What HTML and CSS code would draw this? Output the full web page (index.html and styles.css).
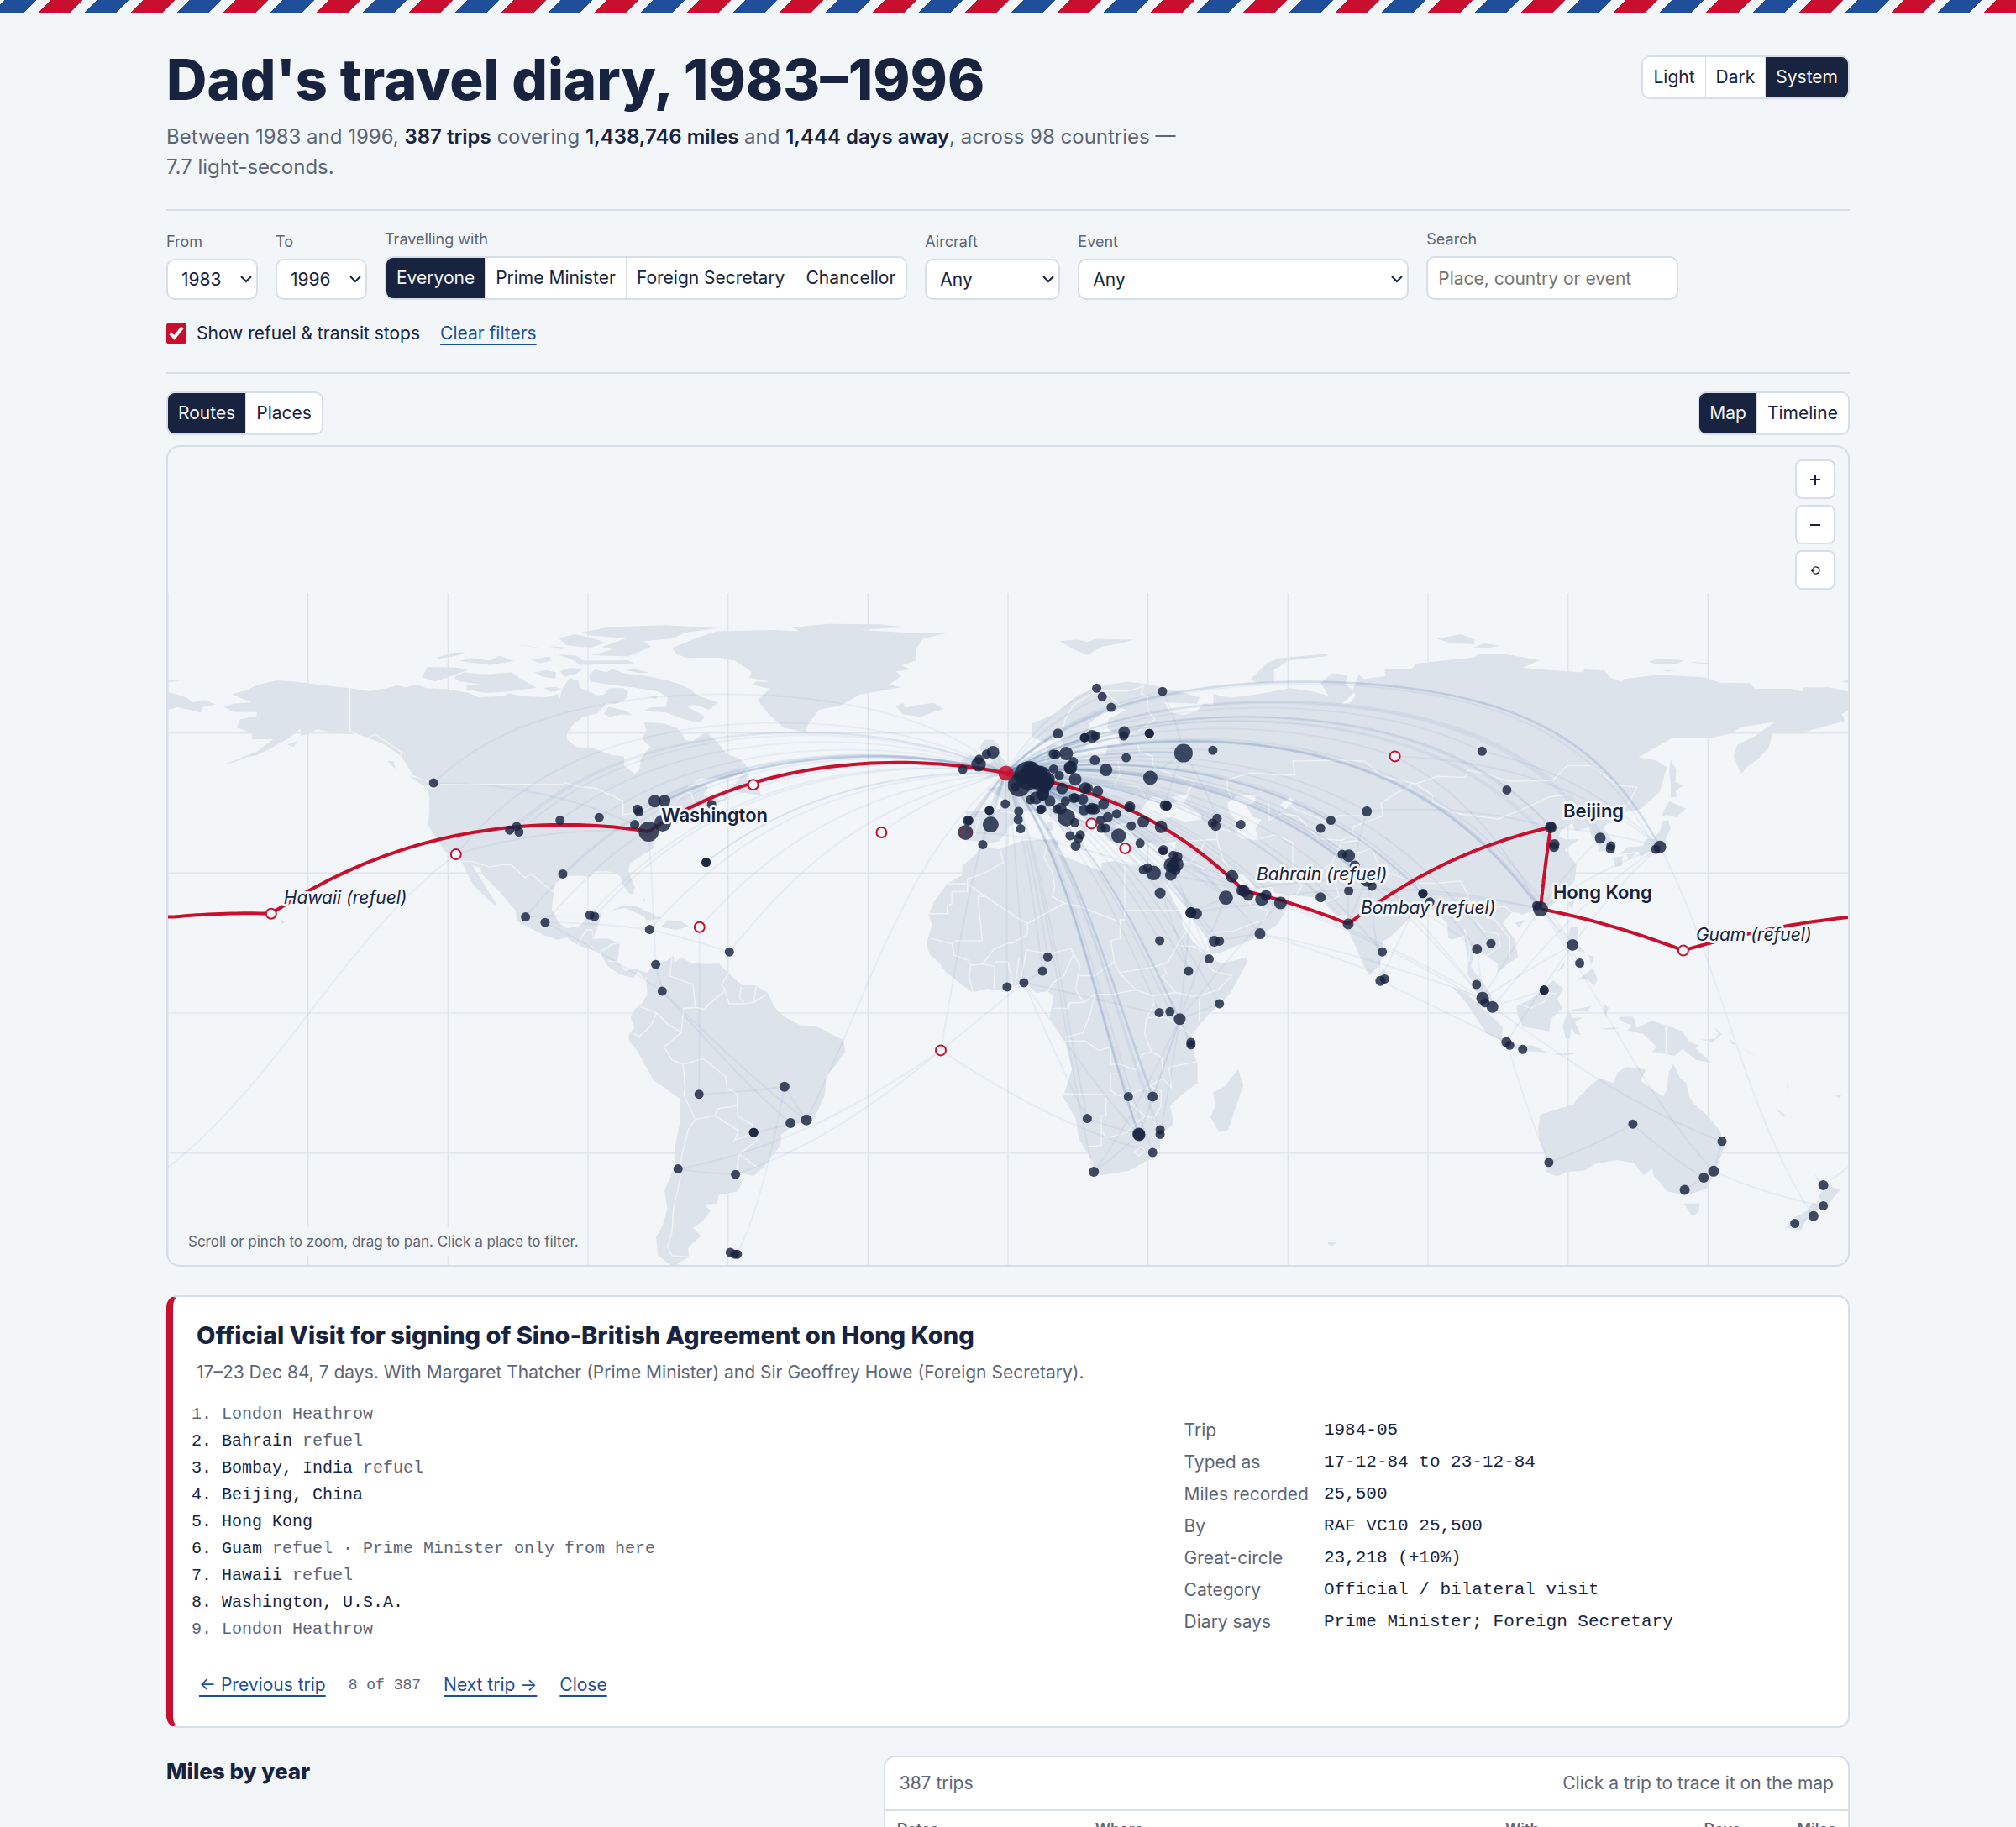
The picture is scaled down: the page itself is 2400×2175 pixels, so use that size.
FILE: index.html
```html
<!DOCTYPE html>
<html lang="en">
<head>
  <meta charset="UTF-8" />
  <meta name="viewport" content="width=device-width, initial-scale=1.0"/>
  <title>Dad's travel diary, 1983–1996</title>
  <link rel="stylesheet" href="styles.css">
</head>
<body>

  <div class="airmail"></div>

  <div class="page">
    <header class="top">
      <div>
        <h1>Dad's travel diary, 1983–1996</h1>
        <p class="summary">Between 1983 and 1996, <strong>387 trips</strong> covering <strong>1,438,746 miles</strong> and <strong>1,444 days away</strong>, across 98 countries — 7.7&nbsp;light-seconds.</p>
      </div>
      <div class="segment" role="group" aria-label="Theme">
        <button type="button">Light</button>
        <button type="button">Dark</button>
        <button type="button" class="active">System</button>
      </div>
    </header>

    <form class="filters">
      <div class="field">
        <label for="from">From</label>
        <select id="from" class="year"><option>1983</option></select>
      </div>
      <div class="field">
        <label for="to">To</label>
        <select id="to" class="year"><option>1996</option></select>
      </div>
      <div class="field">
        <span class="label" id="with-label">Travelling with</span>
        <div class="segment" role="group" aria-labelledby="with-label">
          <button type="button" class="active">Everyone</button>
          <button type="button">Prime Minister</button>
          <button type="button">Foreign Secretary</button>
          <button type="button">Chancellor</button>
        </div>
      </div>
      <div class="field">
        <label for="aircraft">Aircraft</label>
        <select id="aircraft" class="aircraft"><option>Any</option></select>
      </div>
      <div class="field">
        <label for="event">Event</label>
        <select id="event" class="event"><option>Any</option></select>
      </div>
      <div class="field">
        <label for="search">Search</label>
        <input type="search" id="search" class="search" placeholder="Place, country or event">
      </div>
      <div class="options">
        <label class="check"><input type="checkbox" checked> Show refuel &amp; transit stops</label>
        <a href="#" class="link">Clear filters</a>
      </div>
    </form>

    <div class="views">
      <div class="segment" role="group" aria-label="Layer">
        <button type="button" class="active">Routes</button>
        <button type="button">Places</button>
      </div>
      <div class="segment" role="group" aria-label="View">
        <button type="button" class="active">Map</button>
        <button type="button">Timeline</button>
      </div>
    </div>

    <div class="map">
      <svg id="map" viewBox="0 0 2000 974" role="img" aria-label="World map of trips"></svg>
      <div class="zoom">
        <button type="button" aria-label="Zoom in">
          <svg viewBox="0 0 20 20"><path d="M10 4v12M4 10h12"/></svg>
        </button>
        <button type="button" aria-label="Zoom out">
          <svg viewBox="0 0 20 20"><path d="M4 10h12"/></svg>
        </button>
        <button type="button" aria-label="Reset zoom">
          <svg viewBox="0 0 20 20" class="reset"><path d="M5 10H9.5M5 10l2.5-2M5 10l2.5 2M7.5 7.5C9 5 15 5.5 15 10s-6 5-7.5 2.5"/></svg>
        </button>
      </div>
      <p class="hint">Scroll or pinch to zoom, drag to pan. Click a place to filter.</p>
    </div>

    <section class="trip">
      <h2>Official Visit for signing of Sino-British Agreement on Hong Kong</h2>
      <p class="trip-meta">17–23 Dec 84, 7 days. With Margaret Thatcher (Prime Minister) and Sir Geoffrey Howe (Foreign Secretary).</p>
      <div class="trip-body">
        <ol class="stops">
          <li class="home">London Heathrow</li>
          <li>Bahrain <span>refuel</span></li>
          <li>Bombay, India <span>refuel</span></li>
          <li>Beijing, China</li>
          <li>Hong Kong</li>
          <li>Guam <span>refuel · Prime Minister only from here</span></li>
          <li>Hawaii <span>refuel</span></li>
          <li>Washington, U.S.A.</li>
          <li class="home">London Heathrow</li>
        </ol>
        <dl class="facts">
          <dt>Trip</dt><dd>1984-05</dd>
          <dt>Typed as</dt><dd>17-12-84 to 23-12-84</dd>
          <dt>Miles recorded</dt><dd>25,500</dd>
          <dt>By</dt><dd>RAF VC10 25,500</dd>
          <dt>Great-circle</dt><dd>23,218 (+10%)</dd>
          <dt>Category</dt><dd>Official / bilateral visit</dd>
          <dt>Diary says</dt><dd>Prime Minister; Foreign Secretary</dd>
        </dl>
      </div>
      <nav class="pager">
        <a href="#" class="link">← Previous trip</a>
        <span class="count">8 of 387</span>
        <a href="#" class="link">Next trip →</a>
        <a href="#" class="link">Close</a>
      </nav>
    </section>

    <div class="columns">
      <section>
        <h2 class="chart-title">Miles by year</h2>
      </section>
      <section class="log">
        <div class="log-head">
          <span>387 trips</span>
          <span>Click a trip to trace it on the map</span>
        </div>
        <table>
          <thead>
            <tr>
              <th class="dates">Dates</th>
              <th>Where</th>
              <th class="with">With</th>
              <th class="num">Days</th>
              <th class="num">Miles</th>
            </tr>
          </thead>
        </table>
      </section>
    </div>
  </div>

  <script src="map.js"></script>
</body>
</html>
```
FILE: styles.css
```css
* {
  box-sizing: border-box;
}

:root {
  --bg: #f2f6f9;
  --ink: #18233f;
  --muted: #5d6577;
  --line: #d8dee7;
  --card: #fff;
  --land: #dde3eb;
  --red: #c8102e;
  --blue: #1f4f9b;
  --mono: "Liberation Mono", monospace;
}

body {
  margin: 0;
  height: 100vh;
  overflow: hidden;
  background: var(--bg);
  color: var(--ink);
  font-family: Inter, "Liberation Sans", sans-serif;
  font-size: 21px;
  line-height: 32px;
}

.airmail {
  height: 15px;
  background: repeating-linear-gradient(-45deg,
    var(--red) 0 27px, var(--bg) 27px 39px,
    var(--blue) 39px 66px, var(--bg) 66px 78px);
}

.page {
  padding: 0 198px;
}

/* header */
.top {
  display: flex;
  justify-content: space-between;
  align-items: flex-start;
  padding: 42px 0 32px;
  border-bottom: 2px solid var(--line);
}

.top .segment {
  margin-top: 9px;
}

h1 {
  margin: 0;
  font-size: 67px;
  line-height: 76px;
  font-weight: 800;
}

.summary {
  margin: 12px 0 0;
  max-width: 1240px;
  font-size: 24px;
  line-height: 36px;
  color: var(--muted);
}

.summary strong {
  color: var(--ink);
  font-weight: 600;
}

/* controls */
.segment {
  display: inline-flex;
  height: 52px;
  border: 2px solid var(--line);
  border-radius: 10px;
  background: var(--card);
  overflow: hidden;
}

button {
  font: inherit;
  color: var(--ink);
  background: var(--card);
  border: 0;
  cursor: pointer;
}

.segment button {
  padding: 0 12px;
}

.segment button + button {
  border-left: 1px solid var(--line);
}

.segment .active {
  background: var(--ink);
  color: var(--bg);
}

.filters {
  display: flex;
  flex-wrap: wrap;
  align-items: flex-end;
  gap: 26px 21px;
  padding: 20px 0 32px;
  border-bottom: 2px solid var(--line);
}

.field {
  display: flex;
  flex-direction: column;
  gap: 6px;
}

.field > label,
.label {
  font-size: 18px;
  line-height: 28px;
  color: var(--muted);
}

select,
.search {
  font: inherit;
  color: var(--ink);
  background: var(--card);
  border: 2px solid var(--line);
  border-radius: 10px;
}

select {
  height: 49px;
  padding: 0 12px 0 16px;
  appearance: none;
  background: var(--card) url("data:image/svg+xml,%3Csvg xmlns='http://www.w3.org/2000/svg' width='14' height='9'%3E%3Cpath d='M1 1l6 6 6-6' fill='none' stroke='%2318233f' stroke-width='2'/%3E%3C/svg%3E") no-repeat right 5px center;
}

.year {
  width: 109px;
}

.aircraft {
  width: 161px;
}

.event {
  width: 394px;
}

.search {
  width: 300px;
  height: 52px;
  padding: 0 12px;
}

.search::placeholder {
  color: #757575;
}

.options {
  width: 100%;
  display: flex;
  align-items: center;
  gap: 24px;
  line-height: 28px;
}

.check {
  display: flex;
  align-items: center;
  gap: 12px;
}

.check input {
  width: 24px;
  height: 24px;
  margin: 0;
  accent-color: var(--red);
}

.link {
  color: var(--blue);
  text-decoration: underline;
  text-decoration-thickness: 2px;
  text-underline-offset: 5px;
}

.views {
  display: flex;
  justify-content: space-between;
  padding: 21px 0 12px;
}

/* map */
.map {
  position: relative;
  border: 2px solid var(--line);
  border-radius: 16px;
  overflow: hidden;
}

.map > svg {
  display: block;
  width: 100%;
  height: auto;
}

.graticule {
  fill: none;
  stroke: var(--line);
  stroke-width: 1.5;
  opacity: .7;
}

.land {
  fill: var(--land);
}

.water {
  fill: var(--bg);
}

.border {
  fill: none;
  stroke: var(--bg);
  stroke-width: 1.5;
  opacity: .8;
}

.route {
  fill: none;
  stroke: var(--blue);
  stroke-width: 2;
  opacity: .06;
}

.busy {
  stroke-width: 3;
  opacity: .1;
}

.traced {
  fill: none;
  stroke: var(--red);
  stroke-width: 4;
  stroke-linejoin: round;
}

.place {
  fill: var(--ink);
  opacity: .82;
}

.home-dot {
  fill: var(--red);
  opacity: .85;
}

.refuel {
  fill: var(--bg);
  stroke: var(--red);
  stroke-width: 2;
}

.faint {
  fill: none;
  opacity: .4;
}

.tag {
  font-size: 22px;
  font-weight: 600;
  fill: var(--ink);
  stroke: var(--bg);
  stroke-width: 6;
  stroke-linejoin: round;
  paint-order: stroke;
}

.tag-refuel {
  font-size: 21px;
  font-style: italic;
  font-weight: 400;
}

.zoom {
  position: absolute;
  top: 15px;
  right: 15px;
  display: flex;
  flex-direction: column;
  gap: 7px;
}

.zoom button {
  display: grid;
  place-items: center;
  width: 48px;
  height: 47px;
  padding: 0;
  border: 2px solid var(--line);
  border-radius: 8px;
}

.zoom svg {
  width: 20px;
  height: 20px;
  fill: none;
  stroke: var(--ink);
  stroke-width: 2;
}

.zoom .reset {
  stroke-width: 1.3;
}

.hint {
  position: absolute;
  left: 14px;
  bottom: 11px;
  margin: 0;
  padding: 0 10px;
  border-radius: 6px;
  background: var(--bg);
  color: var(--muted);
  font-size: 17px;
  line-height: 34px;
}

/* trip card */
.trip {
  margin-top: 34px;
  padding: 27px 28px 33px;
  border: 2px solid var(--line);
  border-left: 8px solid var(--red);
  border-radius: 14px;
  background: var(--card);
}

h2 {
  margin: 0;
  font-size: 29px;
  line-height: 38px;
  font-weight: 800;
}

.trip-meta {
  margin: 9px 0 0;
  color: var(--muted);
}

.trip-body {
  display: grid;
  grid-template-columns: 3fr 2fr;
  gap: 32px;
  margin-top: 18px;
}

.stops {
  margin: 0;
  padding-left: 30px;
  font-family: var(--mono);
  font-size: 20px;
  line-height: 32px;
}

.stops .home,
.stops span {
  color: var(--muted);
}

.facts {
  display: grid;
  grid-template-columns: max-content 1fr;
  align-content: start;
  gap: 6px 18px;
  margin: 19px 0 0;
}

.facts dt {
  color: var(--muted);
}

.facts dd {
  margin: 0;
  font-family: var(--mono);
}

.pager {
  display: flex;
  align-items: center;
  gap: 27px;
  margin-top: 34px;
  padding-left: 3px;
}

.count {
  font-family: var(--mono);
  font-size: 18px;
  color: var(--muted);
}

/* lower columns */
.columns {
  display: grid;
  grid-template-columns: 5fr 7fr;
  gap: 32px;
  align-items: start;
  margin-top: 33px;
}

.chart-title {
  font-size: 26px;
}

.log {
  border: 2px solid var(--line);
  border-radius: 14px;
  background: var(--card);
}

.log-head {
  display: flex;
  justify-content: space-between;
  padding: 15px 17px;
  border-bottom: 2px solid var(--line);
  color: var(--muted);
}

table {
  width: 100%;
  border-collapse: collapse;
}

th {
  padding: 8px 14px;
  text-align: left;
  font-size: 18px;
  line-height: 28px;
  font-weight: 600;
  color: var(--muted);
}

.dates {
  width: 236px;
}

.with {
  width: 194px;
}

.num {
  width: 114px;
  text-align: right;
}
```
FILE: map.js
```js
// Equirectangular map: 360 degrees over 2000 units, equator at y = 674
const K = 2000 / 360;
const EQUATOR = 674;
const svg = document.getElementById('map');

const px = (lon) => +((lon + 180) * K).toFixed(1);
const py = (lat) => +(EQUATOR - lat * K).toFixed(1);
const parse = (s) => s.trim().split(/\s+/).map(p => p.split(',').map(Number));
const line = (pts) => 'M' + pts.map(p => px(p[0]) + ' ' + py(p[1])).join('L');

// Coastlines as lon,lat
const land = [
  // North America
  `-168,65.6 -166,66.3 -162,66.6 -163.7,67.2 -166.3,68.3 -163,69.2 -161,70.3 -156.6,71.3 -152,70.9 -145,70 -141,69.6 -137,69 -133,69.6
  -131,70.2 -129,69.8 -127,70.4 -124.5,69.6 -120,69.4 -115.5,68.6 -113.5,67.7 -108,67.9 -107,68.5 -104,67.9 -99,67.7 -96.5,68.3 -96,67.4 -95.5,69.5 -94,71.8 -92,71.2 -91.8,69.7 -90,69
  -88,68.1 -86.5,68.2 -85.5,69.6 -82.5,69.6 -81.3,68.8 -82,67.2 -84,66.3 -86,66.4 -87,65.3 -88,64.2 -91,63.5 -93,62 -94.5,60 -94.5,58.7 -92.5,57 -89,56.8 -85,55.3
  -82.3,55 -82.3,53 -80,51.3 -79,52 -78.7,54.5 -76.6,57 -78.5,58.8 -77.5,60.5 -78,62.3 -74,62.1 -71,61.1 -69.6,59.5 -69.2,58.5
  -67.5,58.3 -64.6,60.3 -62,57.7 -60.3,55.5 -57.5,54.5 -55.7,52.5 -57,51.3 -60,50.2 -66,50.2 -69,48.3 -65,49.2 -64.3,48.3
  -65.2,47 -64,46 -61,45.7 -60,46.8 -60.5,45.6 -64,44.5 -66,43.5 -65.8,44.5 -64.8,45.4 -67,44.9 -70,43.7 -70.7,42.5 -70,41.7
  -73.5,41 -74,40.3 -75.2,38.6 -76,37 -75.7,35.4 -78.5,33.8 -81,32 -81.4,30.5 -80,27 -80.3,25.3 -81.3,25.8 -82.7,27.8 -83,29.1
  -84.2,30 -86,30.4 -89,30.3 -89.3,29.2 -91.5,29.4 -94.5,29.4 -97,28 -97.3,26 -97.8,22.3 -96.2,19.2 -94.5,18.2 -92,18.6 -90.6,19.7
  -90.4,21 -87,21.5 -87.6,19.5 -88.2,18 -88.8,15.9 -86,16 -83.2,15 -83.5,12.5 -83.7,11 -82,9 -79.8,9.5 -77.4,8.6 -77.8,7.3
  -79.2,9 -80.3,7.5 -82.8,8.2 -83.7,8.6 -85.7,10 -87.5,12.9 -90,13.8 -92.3,14.6 -94.5,16.2 -96.5,15.7 -99.5,16.7 -102,18
  -105.3,19.8 -105.5,22 -109,26 -112.5,29.5 -113.2,31.2 -114.8,31.7 -112.8,28.5 -111.3,26 -109.5,23.2 -110.2,23.3 -112.1,25
  -114.2,27 -115,28.2 -117.1,32.5 -118.5,34 -120.6,34.5 -122.5,37.5 -124.3,40.3 -124,43 -124,46.2 -124.6,48.3 -122.8,48 -123,49.2
  -127.5,51 -130,55 -133.5,57.5 -136,58.5 -139.5,59.7 -144,60 -148,60.8 -150,59.8 -151.5,59.4 -151.6,60.9 -154,59 -158,56.7 -161,55.2 -164.8,54.6
  -161,56 -157.5,58.7 -162,58.7 -162,60 -165.3,61.2 -164.5,63 -161,63.6 -161,64.5 -166,64.5`,
  // Canadian Arctic
  `-118.8,71.9 -116.7,73 -112,72.6 -106.3,73 -104.6,71.7 -101,69.7 -107,68.9 -112,68.6 -116,69.3 -116,70.3 -113,70.5 -117.5,71`,
  `-125.6,71.9 -124.4,74.2 -117.6,74 -115.8,73.5 -120,71.9 -122.8,71.1`,
  `-117.6,75.4 -115,76.1 -111,75.5 -109,76.6 -105.8,75.4 -111,74.6`,
  `-122.4,76.2 -119,77.2 -116.3,77.3 -117.5,76.7 -122,75.9`,
  `-102.3,75.7 -98.2,76.4 -97.8,75.4 -100.3,75`,
  `-105,79 -100,78.2 -99,78 -103,78.6`,
  `-98.5,78.6 -95,78.4 -95.5,77.9`,
  `-96.6,76.8 -92.6,76.7 -91,75.5 -81.4,75.6 -80.2,74.9 -91.8,74.6 -93.4,75.8`,
  `-96.2,80.3 -93,81.2 -89.4,80.4 -86.2,79.4 -89.4,78.3 -94.6,78.8`,
  `-91.4,81.6 -85.4,82.7 -73.3,83.1 -62.1,82.5 -69.3,81.5 -71.7,80.3 -78.1,79.7 -76.5,78.5 -81.4,76.4 -89.4,76.7 -84.6,77.9 -87,78.5 -81.8,80.3 -89.4,80.9`,
  `-101.5,73 -99,73.5 -96.8,73 -97,71.7 -99.5,72`,
  `-96,73.2 -94,74 -91,73.8 -92.5,72.7 -95,72`,
  `-99.5,69.7 -97,69.9 -95.5,69.2 -98,68.8`,
  `-82,73.5 -80,73.7 -77,73 -79,72.8`,
  `-89.8,72.5 -88.5,73.6 -86,73 -84.8,73.7 -82.2,72.8 -77.3,72.2 -73,71.3 -70.9,70.7 -67.7,69.2 -67,68.3 -62.1,66.5 -64.1,65 -67,66 -69,65.8 -64.9,63.5 -66.1,62.2 -69.5,63
  -73.3,64.4 -78.1,64.7 -76.5,65.5 -73.3,65.6 -72.9,67.7 -74.9,68.9 -80.5,69.8 -85.4,70.4 -89.4,71`,
  `-86.6,64.1 -85.6,65.6 -82,64.8 -80.5,63.8 -83,64 -85.4,63.5`,
  `-77,67.8 -75,68 -75.5,67.3`,
  // Atlantic and Pacific islands
  `-59.3,47.7 -57.5,50.5 -55.8,51.5 -56,50 -53.5,49 -53,46.7 -55.5,47`,
  `-128.3,50.7 -125,50 -123.4,48.4 -125.5,48.9`,
  `-133,54 -131.7,54 -131.2,52.3`, `-154.5,57.5 -152.3,58.3 -153,57`, `-168,53.3 -165,54.4 -163,54.9 -166,53.7`,
  `-84.9,22 -82.5,23.1 -79.5,22.8 -75,20.7 -74.2,20.2 -77.5,19.9 -78,20.7 -82,22.5`,
  `-74.4,18.4 -73,19.9 -70,19.7 -68.4,18.6 -71,17.8`, `-78.3,18.4 -76.3,18 -77.5,17.8`, `-67.2,18.4 -65.6,18.3 -67,17.9`,
  `-78.3,25.1 -77.7,24 -78.2,24`, `-156,20.2 -155,19.5 -155.8,19`,
  `-24,65.6 -22.5,66.4 -22,65.4 -20,65.9 -16,66.5 -13.8,65.2 -18.7,63.5 -22.5,64`,
  `-61,-51.5 -58,-51.4 -59,-52.3`, `68.5,-49 70.4,-49.2 69.5,-49.8 68.7,-49.7`,
  // Greenland
  `-72,78.2 -67,80.3 -62.4,81.8 -49.8,82.1 -44.7,81.8 -46.2,82.6 -38.4,83.4 -27.6,83.3 -22,82.7 -31.8,82.1 -21,81.5 -12.6,81.5
  -18.3,80.2 -19.8,77.9 -19.8,75.5 -22.8,74.5 -20.8,73.6 -24,73.2 -22.8,72.2 -25.5,70.4 -22.8,69.8 -31.8,68.2 -36,65.9 -40.5,65 -42.6,62.3 -43.5,60.2
  -48,61.1 -51.3,64.1 -53.7,67.1 -51,69.5 -54.8,70.3 -54,71 -51,71 -55.5,71.9 -54.9,73.1 -58.5,75.5 -62,76.2 -69,76.1 -71,77`,
  // South America
  `-77.5,8.6 -75.5,10.6 -73,11.3 -71.7,12.3 -71.5,10.8 -70,12 -68,10.7 -64,10.5 -62,10.6 -60,8.6 -57,6 -54,5.9 -51.5,4.3 -50,1.2
  -48,-.7 -44.5,-2.6 -41,-2.9 -37.5,-4.7 -35.2,-5.8 -34.9,-8.3 -37,-11.3 -39,-13.5 -39.2,-17.5 -40.8,-21 -42,-23 -45.5,-23.8
  -48.6,-26 -48.8,-28.5 -50.5,-30.5 -52.5,-33.2 -54.5,-34.9 -58,-34.2 -57,-36.5 -58,-38.2 -62,-39 -62.3,-40.8 -65,-41 -63.8,-42.5
  -65.3,-44.5 -67.5,-46 -65.8,-47.8 -68.5,-50.2 -68.4,-52.3 -71,-53.8 -65.3,-54.8 -68,-55.5 -72,-54.2 -75,-52 -75.4,-48 -74,-45.5
  -73,-42 -73.6,-38 -71.5,-33 -71.4,-29 -70.2,-23 -70.3,-18.4 -76,-14.3 -79.5,-8 -81.2,-6 -81.2,-4.4 -80,-3.2 -80.9,-1 -80,.8
  -78.5,2 -77.3,4 -77.5,7`,
  // Africa
  `-6,35.8 -2,35.1 3,36.9 9.8,37.3 11,36.8 10.2,34.3 15.2,32.3 19.9,30.4 20.1,32.2 23,32.6 28.9,30.9 32.3,31.2 32.6,29.9 35.5,24
  37.2,21 37.4,18.7 39.5,15.5 43.2,12 43.3,11.4 46,10.7 51.2,11.9 51,10.4 47.5,4 43,-.3 39.3,-4.7 39.5,-7.5 40.6,-11 40.6,-15
  37,-17.7 34.8,-19.9 35.5,-23.9 32.8,-25.8 32.5,-28.4 30,-31.5 26,-33.8 20,-34.8 18.3,-34.2 18.2,-32 15.2,-27 14.5,-22.6
  11.8,-18 13.7,-12 12.2,-6 8.9,-1 9.8,3.5 8.5,4.7 6,4.3 4,6.3 1,5.8 -2,4.8 -4.5,5.2 -7.6,4.4 -10.5,6.5 -13.2,8.7 -15,11
  -16.8,12.6 -17.5,14.7 -16.3,19 -17,21 -15.8,24 -13,27.7 -9.8,29.6 -9.8,31.5 -6.8,34`,
  `49.3,-12 50.4,-15.5 47.2,-25 45.2,-25.5 43.4,-22.3 44.4,-20 44,-17 46.5,-15.7`,
  // Europe and Asia
  `-9.2,38.7 -8.9,42 -9,43.2 -2,43.4 -1.4,44.5 -1.2,46 -4.5,48 -1.5,48.7 -1.8,49.7 .2,49.5 1.6,50.9 4,51.8 5,53.4 8.5,53.8 8.2,57
  10.6,57.6 10.3,56 9.8,54.8 11,54 14.2,54 18.5,54.7 21,55.3 21.3,57.4 24.2,57.2 23.5,59.2 28,59.6 30,60 23,59.9 21.3,61 21.5,63
  25.3,65 22.2,65.8 17.3,62 17.1,60.5 18.8,59.8 16.5,57 14.3,55.5 12.9,55.5 11.2,59 8,58.1 5.3,59 5,62 10.5,64.3 14.5,67.8
  19,69.9 25.5,71 31,70.3 41,67.7 40.5,66.3 33.5,66.6 34.8,64.4 37.5,63.9 40.5,64.6 42,66.3 44,66 44,68.4 46,67.8 48,67.6 54,68.4
  60.5,69.6 65,69 68.7,68 67,70.7 69.5,72.8 72.7,72.5 72.3,70.4 74.4,68.9 71.5,66.2 73.5,66.6 74.4,68 74,69.5 75.2,72.5 76.4,71.6 80.9,72.2
  80.7,73.6 86.6,73.8 87.4,74.9 93.1,75.5 99.6,76.2 101.3,77 106.2,77 113.9,75.6 110.2,74 114.3,73.6 123.3,73 123.5,73.6 127.8,73.4 129,71.9
  131.4,71 132,71.6 139.6,72.5 149.4,71.9 152.6,70.8 159.1,70.7 160,69.5 168.1,69.5 170.1,68.9 170.6,69.8 176,69.8 180,68.9 180,64.7 178.7,64.1
  179.3,62.6 170.6,60.2 164,60 163.6,59.3 163,56.9 160.8,54.5 158.3,52.7 157.1,51.2 155.5,55.1 156.3,57.5 160,59.3 164.4,62.4
  160,61.7 157.5,61.4 154.7,59.9 151,59 142.4,59 135.1,54.8 138.8,54.2 141.2,52.7 139.6,47.3 135.5,43.7 132.2,43 130.7,42.3
  127.5,39.8 129.4,37 129,35.2 126.5,34.5 126.5,37.5 125,38 124.5,39.8 121.5,39 121,40.7 118.5,39.1 118,37.8 119.5,37.2 122.4,37.2
  119.3,35 121.8,31.8 121.5,28.5 119,25.5 116.5,23 113.5,22.2 110,21 109.5,21.5 108,21.6 106,19.3 108.5,15.8 109.3,12 106.8,10.3
  104.9,8.7 105,10.5 102.5,12.2 101,13.4 100,13.3 99.2,10 100.3,8.3 102,6.3 103.4,4 104.2,1.4 103.4,1.5 101.3,2.9 100.3,5.6
  98.5,8.3 98.6,11.5 97.7,16.5 95.4,15.8 94.3,16 94.2,19 92,21.5 90.5,22.3 87,21.5 85.5,19.8 82.3,16.6 80.2,15.2 80.3,13.2
  79.8,10.3 78.2,8.9 77.5,8.1 76.3,10 74.8,13.5 73,17.5 72.6,21 70.5,20.8 69,22.2 67,24.7 61.6,25.1 57.3,25.7 56.5,27 53,26.7
  50.8,29.5 48.5,30 48.8,27.7 50.3,26.2 51.3,26.1 51.6,24.5 54,24.1 56.3,26.1 56.5,24.5 59.8,22.5 57.8,19 55.2,17.4 52,15.6
  45,12.8 43.3,12.7 42.7,16 39.2,20.5 37.5,24.3 35,28.1 34.9,29.5 34.2,27.8 32.6,29.9 32.3,31.2 34.3,31.3 35.8,35 36,36.8
  32.5,36.1 30.5,36.6 27.5,36.8 26.3,39.3 26.2,40.4 26,40.8 22.9,40.3 24,37.8 23,36.5 21.5,37 19.5,40 19.5,41.8 16,43.5
  13.7,45.3 12.3,45.3 12.5,44 14,42.4 18.5,40.2 16.9,40.5 17,39 15.7,38 15.7,40 12.3,41.7 10.3,43.8 8.5,44.3 6,43.1 3.2,43.2
  3,41.8 0,39.8 -.3,38.5 -2,36.8 -5.5,36.1 -6.4,36.8 -8.9,37`,
  `-5.6,50.1 -3,50.7 1.3,51.1 1.6,52.7 .2,53 -1.5,55 -2,57.6 -3.2,58.6 -5,58.6 -6.1,56.8 -4.8,54.8 -3,54 -4.6,53.2 -4.3,52.3 -5.2,51.8 -3,51.4`,
  `-10,51.6 -6.3,52.2 -5.7,54.6 -8,55.3 -10,54 -9,53`,
  `12.5,38 15.5,38.2 15.1,36.7`, `8.3,40.9 9.7,40.9 9.5,39.2 8.5,39`, `8.7,42.5 9.4,42.8 9.3,41.5`, `23.6,35.5 26.2,35.2 24,35`, `32.4,35 34.5,35.6 33.5,34.6`,
  // Arctic Russia, Svalbard
  `11,79.7 15,80 17,79.5 19,80.2 27,80 24,79.2 20,78.5 17,76.7 14,78`,
  `52,71.5 55.5,75 58,76 68,77 68.5,76.5 60,75.5 57,73.5 57,71 53.5,70.7`,
  `92,80.2 97,81.2 100,80 99.9,79 95,79.2`, `99.7,78.3 102,79.2 105.3,78.7 103,78.3`,
  `137.2,75.3 140,76 145,75.5 143,74.8 138.5,74.9`, `146,75.3 150.5,75 149,74.7`, `140,73.5 143,73.4 141.5,73.2`,
  `-180,71.4 -177.5,71.2 -180,70.9`, `178.5,71 180,71.4 180,70.8`,
  `-180,68.8 -176,67.6 -174.8,66.6 -172,67.1 -169.8,66.1 -172.5,65.6 -173,64.4 -175.5,65 -178,65.5 -180,65`,
  // East Asia
  `142,54.3 143.2,52 143,49.5 144.7,48.8 143,47.5 143.4,46.3 142,46.2 142,49 141.7,52`,
  `140,42 140.5,43.3 141.7,45.4 145.3,43.8 143.2,42 141,42.5`,
  `131,34 132.7,35.5 136,35.8 136.8,37.3 138.5,37.3 139.8,39.2 140.2,41.1 141.5,41.3 142,39.5 141,37.5 140.8,35.7 139.8,34.9 137,34.6 135.7,33.5 135,34.6`,
  `129.7,33.3 131.7,33.6 131.5,31.5 130.2,31.3`, `132.5,34 134.5,34.2 133.1,32.8`,
  `121.5,25.2 120.9,22 120.1,23.5`, `108.7,19.3 110.8,20 109.5,18.3`,
  // South East Asia
  `120.5,18.5 122.2,18.4 121.7,15 124,12.8 120.7,14 120,15.9`, `122,10.5 123.3,11 122.8,9.3`, `124.4,12.4 125.6,12 125,10.2`, `122,7 125.4,9.7 126.3,7 125.5,5.8 124,7.4`, `117.3,8.3 119.4,11.2 119,10`,
  `109,1.5 109.7,2 111.5,2.6 114,4.5 116.8,7 119,5.2 117.7,3 118.8,1 116.3,-1.2 116,-3.9 110.3,-2.9 109.1,-.3`,
  `95.3,5.6 98.5,4 103.8,-.9 106,-3 105.8,-5.9 102.5,-4.3 98.5,1.8`, `105.3,-6.8 108.5,-6.7 112.6,-7 115.5,-8.4 111,-8.2 106.5,-7.3`,
  `119.5,-5.5 118.9,-2.8 120,.5 125,1.5 124.2,.4 120.3,.3 121,-1 123.2,-1 121.5,-1.9 122.7,-4.7 121.5,-4.5 120.7,-3 120.4,-5.5`,
  `127.5,2 128.7,1.2 128,-.9`, `127,-3.3 130.7,-3.1 130,-3.5 128,-3.5`, `124,-10 127,-8.5 125,-9.5`, `116,-8.8 123,-8.4 120,-9`,
  `131,-.8 134,-.8 134.8,-3.2 138,-1.6 144.5,-3.9 146,-6.2 148,-6.9 147.3,-7.5 150.7,-10.6 147.5,-10.1 144.5,-7.7 142.8,-9.2 138,-8.3 139,-7.3 136,-4.4 132.8,-3.8 133.5,-2.5 131,-1.6`,
  `148.4,-5.7 151.5,-5.5 152.3,-4.3 151,-2.8 153,-4.5 151,-6.2`, `154.6,-5.5 156,-6.8 155,-6.6`, `157,-7.3 161,-9.5 159,-8.5`, `160,-9.3 162,-10.6`,
  `79.8,8 80.3,9.8 81.8,7.5 81.2,6.2 80.1,6`,
  // Oceania
  `113.9,-22.3 114.3,-21.7 117.6,-20.6 121.2,-19.6 122.2,-18 123.3,-17.2 124,-16.2 126.7,-14 129.8,-15 130.6,-12.7 132.6,-11.5 136.7,-12.1 135.5,-14.5 138.5,-16.7 140.4,-17.8 141.2,-16.3 141.6,-12.7
  142.6,-10.9 144,-13.9 145.3,-15 146,-18 146.9,-19.3 150.2,-22.3 152.6,-25.3 153.4,-28.9 151.4,-34.3 149.8,-37.6 146.1,-38.8 143.5,-38.7 141.2,-38.2 139.5,-36 138.4,-34.9
  138,-33.3 136.3,-34.8 135.5,-34 134.3,-32.2 130.6,-31.5 125.7,-32.4 123.7,-33.7 120,-34 117.6,-35 115.1,-34 115.9,-32.5 115,-30 113.9,-27.1 113.6,-25`,
  `144.8,-40.8 148.2,-40.8 148,-42.7 146.6,-43.5`,
  `172.8,-34.5 175,-36.8 178.4,-37.8 177,-39.4 175.3,-41.6 173.8,-39.3 174.7,-38`, `172.7,-40.6 174.3,-41.7 171,-44.3 170,-46.5 166.6,-46 168,-44.2 171,-42.5`,
  `164.2,-20.2 167,-22.2 166,-22`, `166.8,-15 167.5,-16.5 167,-16`, `177.3,-17.6 178.6,-17.7 178,-18.2`,
];

// Black Sea, Caspian, Aral, Red Sea mouth
const water = [
  `28,42 28.7,44 30.8,46.4 33.5,46 32.7,45.4 33.7,44.4 36.5,45.4 35,46.2 39,47.2 37.6,45 41.4,42.5 41.5,41.5 38,41 35,42 31.3,41.2 28.5,41.3`,
  `47,45 49,46.5 53,46.8 53,45.2 51,44.5 52.5,42 54.3,41.5 53,39.5 53.8,37 50,37.4 48.9,38.5 49.3,40.5 47.5,43`,
  `58.2,44.6 60.5,46.3 61.5,45.5 59.5,43.7`,
];

const borders = [
  `-141,69.6 -141,60.3 -137.5,58.9 -135.5,59.7 -133,58 -130,55.9 -130.2,55`,
  `-123,49 -95.2,49 -95,49.4 -92,48.5 -88.5,48.2 -84.6,46.5 -82.5,45.3 -82.5,42.5 -79,43 -76.5,44.2 -74.8,45 -71.5,45 -70,46.5 -69,47.4 -67.8,47 -67.3,45`,
  `-117.1,32.5 -114.8,32.5 -111,31.3 -108.2,31.8 -106.5,31.8 -103.5,29 -102,29.8 -99.5,27.5 -97.2,25.9`,
  `-92.2,14.5 -91.5,16 -90.5,17.8 -89.1,17.8 -88.9,15.9`, `-89.3,14.4 -87.5,13 -85,14.7 -83.2,15`, `-85.7,11.1 -83.7,11`,
  `-72,11.7 -72.5,8 -70,7 -67.5,6.2 -67,1.2 -69.5,1 -70,-4.2 -73,-2.3 -75.3,0 -78.8,1.4`, `-75.3,0 -76.5,-2.7 -79,-5 -80.3,-4.4`,
  `-67,1.2 -65,.8 -64,2 -61,4.5 -60.7,5.2 -61.4,6 -60,8.5`, `-60.7,5.2 -59.8,2 -56.5,2 -54.5,2.3 -51.7,4`, `-57.2,5.7 -57.5,3.3 -56.5,2`, `-54,5.7 -54.5,2.3`,
  `-70,-4.2 -73.7,-7.3 -72,-10 -69.6,-11 -65.3,-9.8 -60.5,-13.6 -60.2,-16.2 -58,-17.3 -58,-20 -57.9,-22.1 -54.6,-24 -54.6,-25.6`,
  `-69.6,-11 -69.2,-16 -69.5,-17.5 -67,-22.8 -62.8,-22 -62.2,-20.5 -58.2,-19.9`, `-62.8,-22 -57.7,-25.2 -58.6,-27.3 -54.6,-25.6 -53.7,-27.2 -57.6,-30.2 -58.2,-34`,
  `-57.6,-30.2 -53.5,-33.3`, `-67,-22.8 -68.5,-25 -70,-31 -70.3,-36 -71.7,-42 -72,-47 -73,-50 -72,-52 -68.4,-52.3`,
  `-8.7,27.7 -4.9,25 1.8,20.5 4.2,19.2 12,23.5 15,23 24,19.5 24,20 25,20 25,31.6`, `25,22 37,22`, `-13,27.7 -8.7,27.7 -8.7,26 -12,26 -12,23.4 -13,23 -13,21.3 -17,21.3`,
  `-1.7,35 -1,32.3 -5,30 -8.7,28.7 -8.7,27.7`, `-4.9,25 -6.5,25 -5.5,15.5 -11,15.5 -12,14.8 -16.5,16`, `8.5,36.9 7.7,33.3 9.5,30.2 10,27 9.5,25 12,23.5`,
  `4.2,19.2 4.2,16.9 1,15 0,15 -3,13.7 -5.5,10.5 -8,10.2`, `-12,14.8 -11.5,12.4 -8.5,11.3 -8,10.2 -8.3,7.6 -7.5,4.4`, `-5.5,10.5 -2.8,10 -3,5.2`, `-2.8,11 0,11 1,6.1`, `2.4,12 1.6,6.3`, `3.6,11.7 2.7,6.4`,
  `3.6,11.7 4,13.5 9,12.8 13.5,13.8 14,12.7 15.5,10 15,8 18.6,8 22.8,11 22,15.5 24,16 24,19.5`, `14,12.7 12,8 9.7,6.5 8.5,4.7`, `15,8 14.5,5 16.2,2.2`,
  `16.2,2.2 18.6,4 22.5,4 27.4,5 24,8.5 22.8,11`, `24,8.7 28,9.3 31,9.8 33,10.5 34,8.5 33,7.8 36,4.4 31,3.7 27.4,5`, `33,10.5 34.3,11 36.5,15 38.5,18`, `36.5,14.4 40,14.3 42.4,12.5`,
  `42,11 42.8,10.6 44,9 48,8 45,5 42,4 39.5,3.5 36,4.4`, `41,3 41,-1.6`, `31,3.7 31.3,2 29.6,-1.3 29.3,-4.4 30.7,-8.3 33,-9.5`, `30,-1 34,-1 37.7,-3.5 39.2,-4.7`, `34.8,-11.5 40.4,-10.5`,
  `12.3,-6 16.5,-6 19.5,-8 22,-7.3 22,-11 24,-11 27.5,-12.2 28.5,-9 30.7,-8.3`, `9.8,1 13,1 13.2,2.2 16.2,2.2`, `18.6,4 17.7,0 16,-4.3 13,-5 12.2,-5`, `22,-13 24,-13`, `22,-13 22,-16.5 23.3,-17.6 25.3,-17.8 30.3,-15.7 33.2,-14 33,-9.5`,
  `11.8,-17.3 18.5,-17.4 23.3,-17.6`, `21,-18 21,-22 20,-22 20,-28.4 17,-28.6`, `20,-25 21,-26.8 25.5,-25.6 27.5,-23.4 29.4,-22.2 31.3,-22.4 32,-25.8`, `25.3,-17.8 27.5,-20.5 29.4,-22.2`, `31.3,-22.4 32.8,-20 32.8,-16.7 30.3,-15.7`, `33.2,-14 35,-16 34.5,-11.6`, `27,-29.7 28.6,-28.7 29.4,-29.5 28,-30.6 27,-29.7`,
  `11.2,59 12.3,63 14,66 18,68.5 20.5,69 24,66`, `20.5,69 25.7,69 29,70 28.5,68.5 30,67.7 29.8,65 31.5,62.9 28,60.5`, `27.8,57.5 28.2,56 31,55 31,53 32,52.2 34.4,51.5 40,49.5 38.3,47.2`, `23.5,54 24,51 22.7,49 28,48.5 29.8,45.5`,
  `14.3,53.9 15,51 12.3,50.3 13.8,48.7 17,48.6 22.7,49`, `-1.8,43.3 3.2,42.4`, `-8.8,42 -6.3,41.7 -7.3,37.2`, `3,51 6,49.5 8.2,49 7.5,47.6 7,46 7.5,43.8`,
  `48,46 47,48 47,50 52,51.5 58,51 61.5,51 61,54 71,54.2 76.5,54 80,50.8 87.3,49.1 92,50.7 98,50.5 98.5,52 102.3,51.3 107,49.7 116.7,49.8 119.8,53 125,53 130.5,48.8 134.8,48.4 133,45 131,43`,
  `87.3,49.1 91,46.7 91,45.2 96,42.8 105,41.6 111,44 116,46.3 120,46.8 116.7,49.8`, `87.3,49.1 83,47 80,45 80.3,42.2 74,40 73.7,38 75,37 78,35.3 79,32.5 81,30.2 88,27.8 92,27.8 97,28.3 98.5,25.5 99,22 102,22.4 106.5,22.8 108,21.6`,
  `55.9,45 56,41.3 58.5,42.7 62,42.3 66.5,37.4 71.5,37 73.7,38`, `58.5,45.5 62,43.5 66,42 68,41 71,42.3 80.3,42.2`, `54,37.4 57,38.2 61,36.6 61,31.5 61.7,31.3 60.9,29.8 66,29.8 69.3,32 71.5,36.5 75,37`, `61.6,25.1 63,27.2 60.9,29.8`, `68,23.7 71,25 70,28 74.5,31 75,34.3 78,35.3`,
  `88,27 89,25.3 89,22`, `92.5,24.5 92.5,21`, `97.8,18 99,14 98.8,11`, `100,20.3 102,17.5 105,17 105.5,14.4 102.5,12.2`, `102,22.4 104,20.4 107.5,16 107.5,12`,
  `44.8,39.7 48,38.8`, `44.8,39.7 44.8,37.2 42.4,37.1 36,36.8`, `44.8,37.2 46,33 48,30`, `42.4,37.1 41,34.4 39,32.3 35.6,32.7`, `39,32.3 46.5,29.1 48.5,28.6`, `52,19 55,20 55.7,22 52,23 51.3,24.4`, `52,19 48,17.5 44,17.3 43,16.5`,
  `141,-2.6 141,-9.1`, `109.6,2 112,1 115,2.5 115.8,4.3 117.6,4.2`,
];

// lon, lat, radius
const places = [
  [-123.1,49.3],[-106.8,39.2],[-105.3,40],[-104.8,38.8],[-96,41.3],[-87.6,41.9],[-79.4,43.6,6],[-79.1,43.1],[-80,40.4],[-75.7,45.4,7.5],
  [-73.6,45.5,7],[-77,38.9,12],[-74,40.7,10],[-63.5,44.7],[-64.7,32.3],[-64.7,32.3],[-95.4,29.8],[-103.4,20.6],[-99.2,19.4],[-89.6,21],
  [-88.6,20.7],[-76.8,17.9],[-59.7,13.1],[-75.5,10.4],[-74.1,4.7],[-66.2,-17.4],[-47.9,-15.8,6],[-43.2,-22.9,6.5],[-46.6,-23.6,6],
  [-54.5,-25.6],[-54.5,-25.6],[-70.7,-33.4],[-58.4,-34.6],[-59.5,-51.3],[-58.5,-51.7],[-58,-51.7],
  [-3.2,55.9,7.5],[-4.6,55.5],[-6.2,54.4],[-6.3,53.3,8.7],[-9.7,52.2],[4.4,50.9,17],[2.4,48.8,13.5],[1.5,48.4],[-.6,44.8],[-4,43.4],[-4,43.4],
  [-3.7,40.4,9.5],[2.3,43.2],[2.2,41.4],[2.7,39.5],[-8.6,41.2,6],[-8.4,41.3],[-9.1,38.7,9],[-5.4,36.1],
  [19,69.6],[20.2,67.8],[22.1,65.5],[33.1,68.9],[10.7,59.9,6],[16.4,59],[16.4,59],[18,59.3,7.5],[18.8,59.4],[24.9,60.2,7],[24.8,59.4],
  [30.3,59.9],[30.3,59.9],[37.6,55.7,11],[43.9,56.3],[30.5,50.4,8.5],[25.3,54.7],[18.6,54.2,6],[21,52.1,7.5],[12.5,55.6,8],[9.7,55.5],[10.3,55.4],
  [14,53.9],[13.4,52.6,8],[13.3,52.5,7],[9.8,52.3],[11,50.9],[14.4,50.1,7.5],[11.6,48.1,7],[16.5,48.2,7],[17.1,48.2,6],[19.2,47.5,6.5],
  [20.5,44.8,6.5],[26.1,44.2,6.5],[26,44],[14.4,46.1],[14.1,46.1,6],[16,45.8,6.5],[12.3,45.4],[4.8,45.7],[6,46.1,7.5],[7.4,47,8],[9,45.4,6.5],
  [7,43.6],[7.2,43.7],[11.3,43.8,7],[10.5,43.7],[12.5,41.9,10.5],[14.3,40.8],[16.3,43.5,6.5],[18,43.8,7],[18.6,43.7,6.5],[17.5,43.7],
  [19.8,41.3],[21.4,42,6],[23.3,42.7],[20,39.6],[20.9,39.6],[23.7,38,8.7],[26.4,40.1],[29,41,7],[32.8,39.9,7.5],[28.3,36.4],
  [33.6,44.5,6],[34,44.4,6],[34.1,44.4],[44.8,41.7],[43.8,40.7],[44.5,40.1,6],[49.9,40.4],[13.3,38],[15.5,38.2],[15.1,37.4],[14.5,35.8,6],
  [4.9,52.4,9],[4.3,51.9,8],[7,50.8,12],[6.2,49.7,10],[6.8,51.3,9],[8.6,50.1,8],[8,49,8],[7.8,48.5,8],[6,50.6,14],[3.1,50.6,8],[8.7,49.4,7],[7.5,46.8,7],
  [33.3,34.9,6],[33.2,34.7,5],[35.4,33.8],[36.3,33.5,6],[36,31.9,9],[35,31.7,9],[35.2,31.4,7],[35.9,30.6,6],[34.9,29.6,7],[29,30.7],[29.9,31.1],[31.2,30,8.7],[32.6,25.7,6.5],
  [48,29.3,7.5],[50.2,26.3,7],[50.6,26.1,7],[51.5,25.2,6.5],[46.7,24.7,8.5],[54.4,24.4,8],[55.3,25.2,6.5],[58.4,23.6,7.5],[39.2,21.5,6.5],[39.2,21.5,6.5],[40.4,21.3,6.5],
  [54,17,6.5],[45.3,15.4],[44.2,15.4,6.5],[43.1,11.6],[32.5,15.5],[38.7,9],[45.3,2],[32.4,.1],[34.7,.3],[36.8,-1.3,7],[39.2,-6.3],[39.2,-6.8],
  [25.8,-17.9],[31,-17.9,6],[17,-22.6],[28,-25.9,7.5],[28.1,-26.1,7.5],[32.6,-25],[32.6,-26],[31,-29.9],[18.4,-34,6],[-.2,5.6],[3.4,6.5],[7.4,9],[8.5,12],
  [101.6,56.1],[106.9,47.8],[76.9,43.2,6],[69.2,41.3],[67,39.6],[71.6,34],[73,33.7,7.5],[74.3,31.6,6],[76.9,28.5,8],[78,27.2],[73,26.2],[67,24.8,6],
  [72.9,19.1,6.5],[88.9,25.6],[88.9,25.6],[90.4,23.8],[80.2,13.1],[80.7,7.3],[79.8,6.9,6],[100.5,13.7,6],[103.5,14.9],[100.4,6.1],[101.7,3.2,7.5],
  [102.2,2.2],[103.8,1.3,7],[114.9,4.9],[114.9,4.9],[106.8,-6.2,6],[107.5,-6.9],[110.3,-7.8],[121,14.6,7],[122.5,10.7],
  [116.3,39.8,7],[116.4,39.9],[117.1,36.2,6],[117,35.6,6],[126.9,37.5,6.5],[129.2,35.8],[129.1,35.2],[139.7,35.6,7.5],[138.8,35.1],[114.1,22.3,9],[113.3,23],
  [133.9,-23.8],[153,-27.5],[151.2,-33.9,6.5],[149.1,-35.3,6],[145,-37.9,6],[115.9,-32],[174.7,-36.9,6],[174.7,-41.3],[172.6,-43.5,6],[168.6,-45.1],
];

const refuels = [[-118.3,34],[-157.9,21.3],[-66.1,18.4],[-54.6,48.9],[-27.1,38.7],[17.9,40.6],[25.1,35.3],[-14.4,-8],[82.9,55],[144.7,13.4]];

const LON = [-.45,51.4];

// Legs flown between two places other than London
const legs = [
  [[-123.1,49.3],[-77,38.9]],[[-118.3,34],[-77,38.9]],[[174.7,-36.9],[-118.3,34]],[[-77,38.9],[-75.5,10.4]],[[-76.8,17.9],[-59.7,13.1]],
  [[-99.2,19.4],[-76.8,17.9]],[[-103.4,20.6],[-88.6,20.7]],[[-99.2,19.4],[-74.1,4.7]],[[-75.5,10.4],[-74.1,4.7]],[[-74.1,4.7],[-46.6,-23.6]],[[-74.1,4.7],[-43.2,-22.9]],
  [[-66.1,18.4],[-66.2,-17.4]],[[-66.2,-17.4],[-47.9,-15.8]],[[-47.9,-15.8],[-43.2,-22.9]],[[-54.5,-25.6],[-43.2,-22.9]],[[-70.7,-33.4],[-58.4,-34.6]],
  [[-70.7,-33.4],[-14.4,-8]],[[-58.4,-34.6],[-14.4,-8]],[[-58,-51.7],[-47.9,-15.8]],[[-14.4,-8],[3.4,6.5]],[[-14.4,-8],[31,-29.9]],
  [[3.4,6.5],[36.8,-1.3]],[[3.4,6.5],[17,-22.6]],[[3.4,6.5],[28,-26]],[[7.4,9],[8.5,12]],[[7.4,9],[3.4,6.5]],[[18.4,-34],[28,-26]],[[18.4,-34],[36.8,-1.3]],
  [[17,-22.6],[28,-26]],[[36.8,-1.3],[31,-17.9]],[[36.8,-1.3],[28,-26]],[[36.8,-1.3],[32.6,-26]],[[36.8,-1.3],[46.7,24.7]],[[36.8,-1.3],[58.4,23.6]],[[36.8,-1.3],[45.3,2]],
  [[36.8,-1.3],[39.2,21.5]],[[31.2,30],[38.7,9]],[[35,31.7],[39.2,21.5]],[[39.2,21.5],[46.7,24.7]],[[39.2,21.5],[58.4,23.6]],[[44.2,15.4],[54,17]],[[39.2,21.5],[43.1,11.6]],
  [[36,31.9],[46.7,24.7]],[[36,31.9],[48,29.3]],[[36,31.9],[50.2,26.3]],[[31.2,30],[50.2,26.3]],[[54,17],[80.2,8]],[[54,17],[101.7,3.2]],[[54.4,24.4],[103.8,1.3]],
  [[50.2,26.3],[76.9,28.5]],[[54.4,24.4],[114.1,22.3]],[[58.4,23.6],[101.7,3.2]],[[73,33.7],[72.9,19.1]],[[76.9,28.5],[72.9,19.1]],[[76.9,28.5],[80,7]],[[76.9,28.5],[100.5,13.7]],
  [[76.9,28.5],[101.7,3.2]],[[88.9,25.6],[114.1,22.3]],[[79.8,6.9],[106.8,-6.2]],[[79.8,6.9],[88.9,25.6]],[[100.5,13.7],[101.7,3.2]],[[101.7,3.2],[114.1,22.3]],[[101.7,3.2],[121,14.6]],
  [[103.8,1.3],[114.9,4.9]],[[103.8,1.3],[139.7,35.6]],[[103.8,1.3],[153,-27.5]],[[106.8,-6.2],[115.9,-32]],[[106.8,-6.2],[121,14.6]],[[114.1,22.3],[121,14.6]],
  [[114.1,22.3],[151.2,-33.9]],[[114.1,22.3],[139.7,35.6]],[[114.1,22.3],[126.9,37.5]],[[116.3,39.8],[139.7,35.6]],[[76.9,43.2],[73,26.2]],[[76.9,43.2],[116.3,39.8]],
  [[139.7,35.6],[172.6,-43.5]],[[139.7,35.6],[121,14.6]],[[133.9,-23.8],[115.9,-32]],[[133.9,-23.8],[149.1,-35.3]],[[153,-27.5],[151.2,-33.9]],[[151.2,-33.9],[145,-37.9]],[[151.2,-33.9],[174.7,-41.3]],
  [[174.7,-36.9],[172.6,-43.5]],[[172.6,-43.5],[168.6,-45.1]],[[37.6,55.7],[30.5,50.4]],[[37.6,55.7],[33.1,68.9]],[[37.6,55.7],[33.6,44.5]],[[37.6,55.7],[44.8,41.7]],
  [[82.9,55],[114.1,22.3]],[[82.9,55],[139.7,35.6]],[[101.6,56.1],[139.7,35.6]],[[-9.1,38.7],[31.2,30]],[[12.5,41.9],[50.2,26.3]],[[29,41],[50.2,26.3]],
];

const busy = [[-77,38.9],[-73.6,45.5],[28,-26],[31,-17.9],[114.1,22.3],[139.7,35.6],[50.2,26.3],[37.6,55.7],[76.9,28.5],[-3.7,40.4],[-9.1,38.7]];

const trip = [
  { at: LON },
  { at: [50.6,26.2], name: 'Bahrain (refuel)', refuel: true },
  { at: [72.9,19.1], name: 'Bombay (refuel)', refuel: true },
  { at: [116.3,39.8], name: 'Beijing' },
  { at: [114.1,22.3], name: 'Hong Kong' },
  { at: [144.7,13.4], name: 'Guam (refuel)', refuel: true },
  { at: [-157.9,21.3], name: 'Hawaii (refuel)', refuel: true },
  { at: [-77,38.9], name: 'Washington' },
  { at: LON },
];

// Great circle between two points, broken where it crosses the date line
function arc(a, b) {
  const rad = Math.PI / 180;
  const vec = ([lon, lat]) => [
    Math.cos(lat * rad) * Math.cos(lon * rad),
    Math.cos(lat * rad) * Math.sin(lon * rad),
    Math.sin(lat * rad),
  ];
  const u = vec(a);
  const v = vec(b);
  const d = Math.acos(Math.min(1, u[0] * v[0] + u[1] * v[1] + u[2] * v[2]));
  if (d < 0.001) return '';
  const runs = [[]];
  let last = a[0];
  for (let i = 0; i <= 48; i++) {
    const t = i / 48;
    const p = Math.sin((1 - t) * d) / Math.sin(d);
    const q = Math.sin(t * d) / Math.sin(d);
    const [x, y, z] = [0, 1, 2].map(n => p * u[n] + q * v[n]);
    const lon = Math.atan2(y, x) / rad;
    const lat = Math.asin(z) / rad;
    const jump = lon - last;
    if (Math.abs(jump) > 180) {
      runs[runs.length - 1].push([lon - Math.sign(jump) * 360, lat]);
      runs.push([[last + Math.sign(jump) * 360, lat]]);
    }
    runs[runs.length - 1].push([lon, lat]);
    last = lon;
  }
  return runs.map(line).join('');
}

const direct = ([lon, lat]) => lon > -130 && lon < 140 && !(lon < -44 && lat < 12) && !(lon > 79 && lat < 10 && lat !== 3.2);

let out = '';

let grid = '';
for (let lon = -180; lon < 180; lon += 30) grid += `M${px(lon)} ${py(90)}V974`;
for (let lat = -30; lat <= 60; lat += 30) grid += `M0 ${py(lat)}H2000`;
out += `<path class="graticule" d="${grid}"/>`;

out += `<path class="land" d="${land.map(s => line(parse(s)) + 'Z').join('')}"/>`;
out += `<path class="water" d="${water.map(s => line(parse(s)) + 'Z').join('')}"/>`;
out += `<path class="border" d="${borders.map(s => line(parse(s))).join('')}"/>`;

places.concat(refuels).filter(direct).forEach(p => {
  out += `<path class="route" d="${arc(LON, p)}"/>`;
});
legs.forEach(([a, b]) => out += `<path class="route" d="${arc(a, b)}"/>`);
busy.forEach(p => out += `<path class="route busy" d="${arc(LON, p)}"/>`);

out += `<path class="traced" d="${trip.slice(1).map((s, i) => arc(trip[i].at, s.at)).join('')}"/>`;

places.forEach(([lon, lat, r = 5.5]) => {
  out += `<circle class="place" cx="${px(lon)}" cy="${py(lat)}" r="${r}"/>`;
});
out += `<circle class="home-dot" cx="${px(LON[0])}" cy="${py(LON[1])}" r="9"/>`;
refuels.forEach(([lon, lat]) => {
  out += `<circle class="refuel" cx="${px(lon)}" cy="${py(lat)}" r="6"/>`;
});
out += `<circle class="refuel faint" cx="${px(-9.1)}" cy="${py(38.7)}" r="6"/>`;

trip.filter(s => s.name).forEach(s => {
  const [lon, lat] = s.at;
  out += `<text class="tag${s.refuel ? ' tag-refuel' : ''}" x="${px(lon) + 15}" y="${py(lat) - 12}">${s.name}</text>`;
});

svg.innerHTML = out;
```
